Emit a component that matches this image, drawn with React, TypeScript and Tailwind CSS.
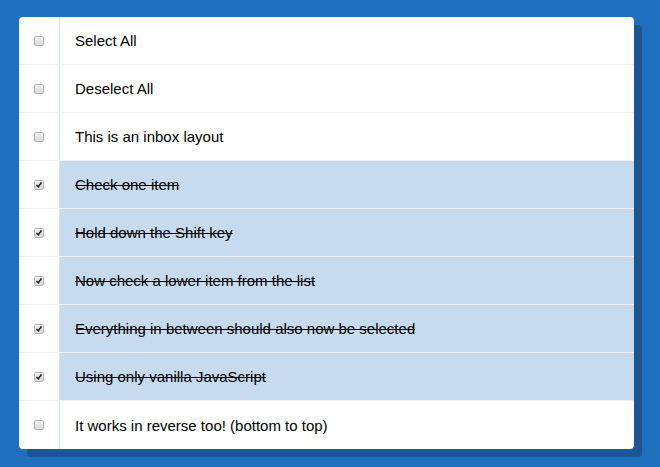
import React from 'react';

const items = [
  { label: 'Select All', checked: false },
  { label: 'Deselect All', checked: false },
  { label: 'This is an inbox layout', checked: false },
  { label: 'Check one item', checked: true },
  { label: 'Hold down the Shift key', checked: true },
  { label: 'Now check a lower item from the list', checked: true },
  { label: 'Everything in between should also now be selected', checked: true },
  { label: 'Using only vanilla JavaScript', checked: true },
  { label: 'It works in reverse too! (bottom to top)', checked: false },
];

function Box({ checked }: { checked: boolean }) {
  return (
    <span className="relative block w-[10px] h-[10px] rounded-[2px] border border-[#b4b4b4] bg-gradient-to-b from-[#f4f4f4] to-[#d8d8d8]">
      {checked && (
        <svg viewBox="0 0 10 10" className="absolute left-0 top-0 w-[8px] h-[8px]">
          <path d="M1.8 5 L4 7.2 L8.2 1.8" fill="none" stroke="#222" strokeWidth="2" />
        </svg>
      )}
    </span>
  );
}

export default function App() {
  return (
    <div className="min-h-[467px] bg-[#1e6fbc] pt-[17px] pl-[19px]" style={{ fontFamily: '"Liberation Sans", Arial, sans-serif' }}>
      <div className="w-[615px] bg-white rounded-[4px] shadow-[8px_8px_0_#1a5794] overflow-hidden">
        {items.map((item, i) => (
          <div
            key={i}
            className={`flex items-stretch h-[48px] ${i < items.length - 1 ? 'border-b border-[#f1f1f1]' : ''}`}
          >
            <div className="w-[40px] flex items-center justify-center">
              <Box checked={item.checked} />
            </div>
            <p
              className={`flex-1 flex items-center pl-[15px] pt-[2px] text-[15px] text-black border-l border-[#d1e2ff] ${
                item.checked ? 'bg-[#c6dbef] line-through' : ''
              }`}
            >
              {item.label}
            </p>
          </div>
        ))}
      </div>
    </div>
  );
}
